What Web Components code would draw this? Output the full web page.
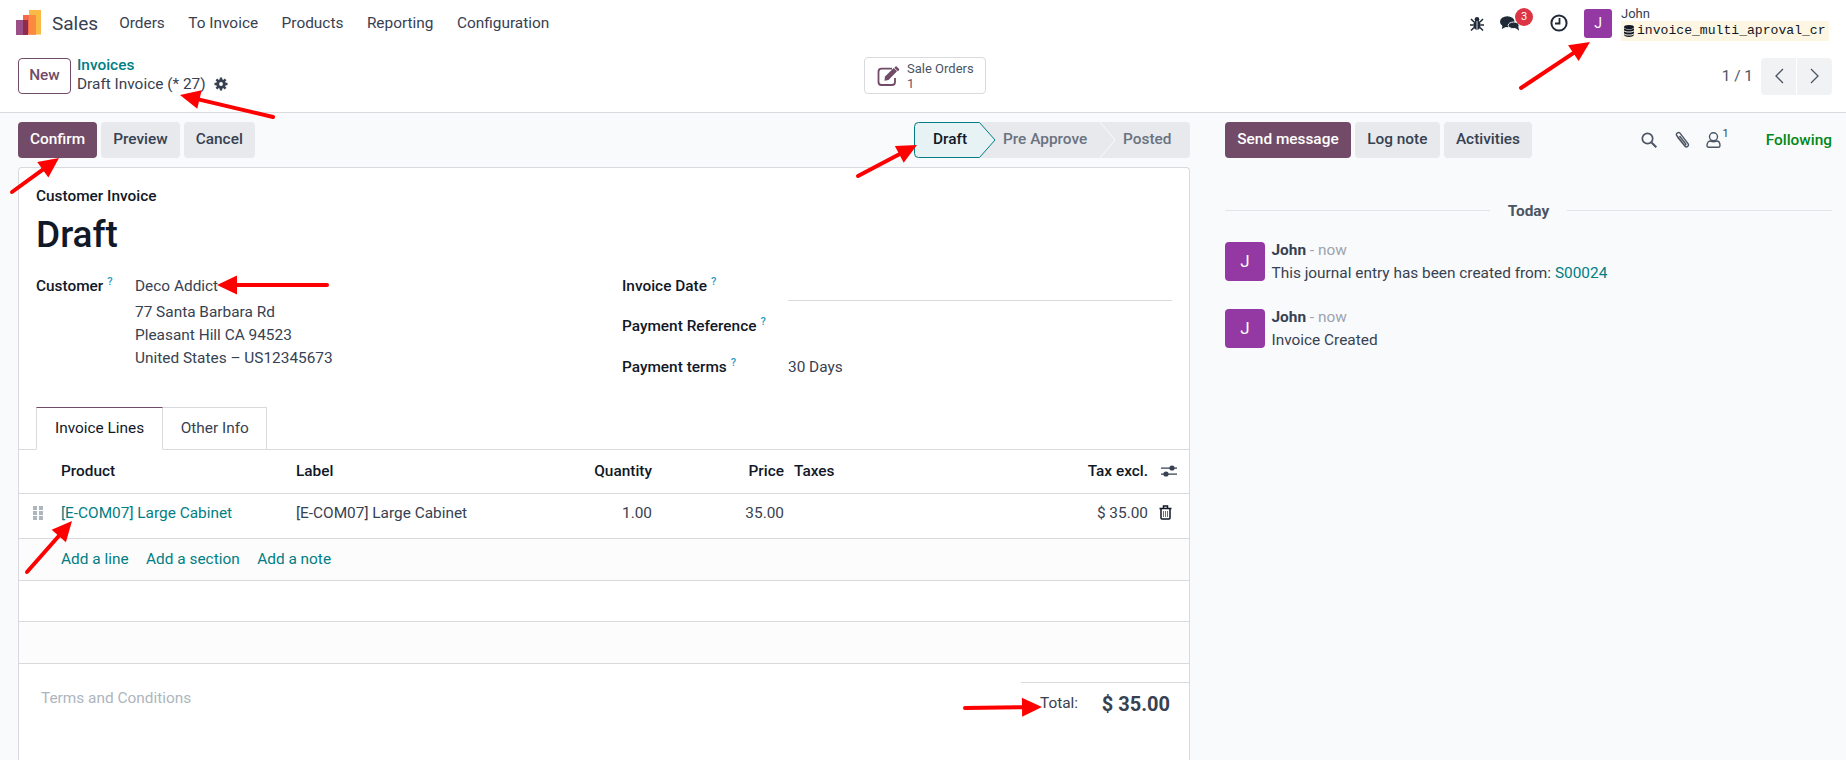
<!DOCTYPE html>
<html>
<head>
<meta charset="utf-8">
<style>
html, body { margin: 0; height: 760px; overflow: hidden; background: #fff; }
body { font-family: Roboto, "Liberation Sans", sans-serif; font-size: 15.4px; color: #374151; position: relative; }
</style>
</head>
<body>
<app-navbar></app-navbar>
<control-panel></control-panel>
<main-area></main-area>
<red-arrows></red-arrows>

<script>
const ICONS = {
    bug: `<svg width="14" height="15" viewBox="0 0 14 15" fill="#1f2937"><ellipse cx="7" cy="9" rx="3.6" ry="5"/><circle cx="7" cy="3.2" r="2.3"/><path d="M1 3l3 3M13 3l-3 3M0 9h3.5M14 9h-3.5M1 14.5l3-3M13 14.5l-3-3" stroke="#1f2937" stroke-width="1.5"/><path d="M7 5v9" stroke="#fff" stroke-width=".8"/></svg>`,
    chat: `<svg width="20" height="17" viewBox="0 0 22 18" fill="#1f2937"><ellipse cx="8" cy="7" rx="8" ry="6"/><path d="M3 10l-1 5 6-3z"/><ellipse cx="15" cy="11" rx="6" ry="3.6" stroke="#fff"/><path d="M16 13l5 4-1-5z"/></svg>`,
    clock: `<svg width="18" height="18" viewBox="0 0 18 18" fill="none" stroke="#1f2937"><circle cx="9" cy="9" r="7.6" stroke-width="2"/><path d="M9.5 4v5.5H5" stroke-width="1.8"/></svg>`,
    db: `<svg width="10" height="12" viewBox="0 0 10 12" fill="#111827"><ellipse cx="5" cy="2" rx="5" ry="2"/><path d="M0 3.300C1 4.900 9 4.900 10 3.300v2C9 6.900 1 6.900 0 5.300zM0 6.300C1 7.900 9 7.900 10 6.300v2C9 9.900 1 9.900 0 8.300zM0 9.300C1 10.900 9 10.900 10 9.300V10C9 12.500 1 12.500 0 10z"/></svg>`,
    gear: `<svg width="14" height="14" viewBox="0 0 14 14"><path d="M7 .5v13M.5 7h13M2.400 2.400l9.200 9.200M11.600 2.400l-9.200 9.200" stroke="#374151" stroke-width="2.400"/><circle cx="7" cy="7" r="4.800" fill="#374151"/><circle cx="7" cy="7" r="1.900" fill="#fff"/></svg>`,
    edit: `<svg width="24" height="20" viewBox="0 0 24 20" fill="none"><path d="M15 2.700H4.500A3 3 0 0 0 1.500 5.700v10.300a3 3 0 0 0 3 3h10.500a3 3 0 0 0 3-3v-4" stroke="#714b67" stroke-width="1.800"/><path d="M8 10.500L16.700 2l3.300 3.300-8.500 8.700-4 .7z" fill="#714b67"/><path d="M18 .8l1.300-.5 3 3-.5 1.200-1 .8-3.300-3.300z" fill="#714b67"/></svg>`,
    trash: `<svg width="13" height="15" viewBox="0 0 13 15" fill="none" stroke="#111827" stroke-width="1.500"><path d="M.5 3.500h12M4.500 3V1h4v2M2 3.500V13a1 1 0 0 0 1 1h7a1 1 0 0 0 1-1V3.500"/><path d="M4.500 6v6M6.500 6v6M8.500 6v6" stroke="#8a6d3b" stroke-width="1"/></svg>`,
    sliders: `<svg width="16" height="14" viewBox="0 0 16 14" fill="#374151"><path d="M0 3.500h16v1.200H0zM0 9.500h16v1.200H0z"/><circle cx="11" cy="4" r="2.600"/><circle cx="5" cy="10" r="2.600"/></svg>`,
    search: `<svg width="16" height="16" viewBox="0 0 16 16" fill="none" stroke="#4b5563" stroke-width="1.700"><circle cx="6.500" cy="6.500" r="5.200"/><path d="M10.500 10.500L15.300 15.300" stroke-width="2"/></svg>`,
    clip: `<svg width="17" height="18" viewBox="0 0 17 18" fill="none" stroke="#4b5563" stroke-width="1.400"><path d="M3.500 6l7.500 9.200c1.500 1.800 4.500-.4 3-2.500L6 2.200C4.700.5 1.500 2.300 2.700 4.500l7.300 9.300c.8 1 2.300-.1 1.600-1.100L5.500 5"/></svg>`,
    user: `<svg width="15" height="16" viewBox="0 0 15 16" fill="none" stroke="#4b5563" stroke-width="1.400"><ellipse cx="7.500" cy="4.700" rx="4" ry="4"/><path d="M1 13.500c0-3 1.700-4.500 3.500-4.500 2 1 4 1 6 0 1.800 0 3.500 1.500 3.500 4.500 0 1-.7 1.800-1.700 1.800H2.700C1.700 15.300 1 14.500 1 13.500z"/></svg>`,
    grip: `<svg width="10" height="14" viewBox="0 0 10 14" fill="#adb5bd"><path d="M0 0h4v4H0zM6 0h4v4H6zM0 5h4v4H0zM6 5h4v4H6zM0 10h4v4H0zM6 10h4v4H6z"/></svg>`
};

// top bar with the app menu and the systray
class AppNavbar extends HTMLElement {
    constructor() {
        super();
        this.attachShadow({mode: "open"}).innerHTML = `
        <style>
        :host { display: flex; align-items: center; height: 46px; padding-left: 15px; padding-right: 17px; color: #374151; box-sizing: border-box; }
        .logo { width: 26px; height: 26px; margin-right: 11px; }
        .app { font-size: 19px; margin-right: 21px; color: #374151; }
        .menu { display: flex; gap: 23.500px; color: #374151; }
        .right { margin-left: auto; display: flex; align-items: center; }
        .bug { display: flex; margin-right: 16px; }
        .chat { display: flex; position: relative; margin-right: 30px; }
        .badge { position: absolute; left: 15px; top: -7px; width: 18px; height: 18px; border-radius: 50%; background: #dc3545; color: #fff; font-size: 11px; line-height: 18px; text-align: center; }
        .clock { display: flex; margin-right: 16px; }
        .avatar { width: 28px; height: 29px; background: #9439a3; border-radius: 3px; color: #fff; font-size: 14px; line-height: 29px; text-align: center; margin-right: 9px; }
        .who { width: 208px; font-size: 13px; line-height: 14px; margin-top: 2px; }
        .db { display: flex; align-items: center; gap: 3px; background: #fdf6e3; height: 20px; padding-left: 3px; font-family: "Liberation Mono", monospace; font-size: 13.1px; color: #111827; }
        </style>
        <svg class="logo" viewBox="0 0 26 26"><rect x="14" y="0" width="12" height="24.500" fill="#fbb945"/><rect x="8" y="5" width="13" height="19.500" fill="#f5694a"/><rect x="14" y="5" width="7" height="19.500" fill="#fc8a3e"/><rect x="1" y="10" width="12" height="15" fill="#9a5086"/><rect x="8" y="10" width="5" height="15" fill="#8e2c4e"/></svg>
        <span class="app">Sales</span>
        <nav class="menu"><span>Orders</span><span>To Invoice</span><span>Products</span><span>Reporting</span><span>Configuration</span></nav>
        <div class="right">
            <span class="bug">${ICONS.bug}</span>
            <span class="chat">${ICONS.chat}<span class="badge">3</span></span>
            <span class="clock">${ICONS.clock}</span>
            <span class="avatar">J</span>
            <div class="who">John<div class="db">${ICONS.db}<span>invoice_multi_aproval_cr</span></div></div>
        </div>`;
    }
}
customElements.define("app-navbar", AppNavbar);

class ControlPanel extends HTMLElement {
    constructor() {
        super();
        this.attachShadow({mode: "open"}).innerHTML = `
        <style>
        :host { display: grid; grid-template-columns: 1fr auto 1fr; align-items: center; height: 67px; padding: 2px 14px 8px 18px; box-sizing: border-box; border-bottom: 1px solid #d8dadd; }
        .left { display: flex; align-items: center; }
        .new { width: 53px; height: 36px; box-sizing: border-box; border: 1px solid #714b67; border-radius: 4px; color: #714b67; font-weight: 500; line-height: 33px; text-align: center; margin-right: 6px; }
        .crumbs { line-height: 21px; }
        .crumbs a { display: block; color: #017e84; font-weight: 500; line-height: 17px; }
        .gear { display: inline-flex; margin-left: 8px; vertical-align: -2px; }
        .stat { display: flex; align-items: center; gap: 6px; width: 122px; height: 37px; box-sizing: border-box; padding-left: 12px; margin-top: -1px; border: 1px solid #d8dadd; border-radius: 4px; font-size: 13px; line-height: 15px; color: #4b5563; }
        .stat div span { display: block; color: #714b67; }
        .pager { justify-self: end; display: flex; align-items: center; gap: 8px; color: #4b5563; }
        .nav { display: flex; gap: 1px; }
        .nav span { display: flex; align-items: center; justify-content: center; width: 35px; height: 37px; background: #f1f2f4; }
        .nav span:first-child { border-radius: 4px 0 0 4px; }
        .nav span:last-child { border-radius: 0 4px 4px 0; }
        </style>
        <div class="left">
            <span class="new">New</span>
            <div class="crumbs"><a>Invoices</a>Draft Invoice (* 27)<span class="gear">${ICONS.gear}</span></div>
        </div>
        <div class="stat">${ICONS.edit}<div>Sale Orders<span>1</span></div></div>
        <div class="pager">
            <span>1 / 1</span>
            <div class="nav">
                <span><svg width="10" height="16" viewBox="0 0 10 16" fill="none" stroke="#4b5563" stroke-width="1.300"><path d="M9 1L2 8l7 7"/></svg></span>
                <span><svg width="10" height="16" viewBox="0 0 10 16" fill="none" stroke="#4b5563" stroke-width="1.300"><path d="M1 1l7 7-7 7"/></svg></span>
            </div>
        </div>`;
    }
}
customElements.define("control-panel", ControlPanel);

class OdooButton extends HTMLElement {
    constructor() {
        super();
        this.attachShadow({mode: "open"}).innerHTML = `
        <style>
        :host { display: block; height: 36px; padding: 0 12px; border-radius: 4px; background: #e7e9ed; color: #374151; font-weight: 500; line-height: 34px; }
        :host([primary]) { background: #714b67; color: #fff; }
        </style>
        <slot></slot>`;
    }
}
customElements.define("odoo-button", OdooButton);

class StatusBar extends HTMLElement {
    constructor() {
        super();
        this.attachShadow({mode: "open"}).innerHTML = `
        <style>
        :host { display: flex; height: 36px; width: 276px; background: #e7e9ed; border-radius: 4px; font-weight: 500; line-height: 34px; color: #6b7280; position: relative; }
        span { display: block; }
        .cur { color: #111827; width: 89px; padding-left: 19px; box-sizing: border-box; }
        .pre { width: 120px; }
        svg { position: absolute; left: 0; top: 0; }
        .txt { position: relative; display: flex; }
        </style>
        <svg width="276" height="36" viewBox="0 0 276 36">
            <path d="M4.500.5H65.500L81 18 65.500 35.500H4.500A4 4 0 0 1 .5 31.500V4.500A4 4 0 0 1 4.500.5z" fill="#e6f2f3" stroke="#017e84"/>
            <path d="M186 0l15 18-15 18" fill="none" stroke="#f9fafb"/>
        </svg>
        <div class="txt"><span class="cur">Draft</span><span class="pre">Pre Approve</span><span class="post">Posted</span></div>`;
    }
}
customElements.define("status-bar", StatusBar);

class FieldRow extends HTMLElement {
    constructor() {
        super();
        this.attachShadow({mode: "open"}).innerHTML = `
        <style>
        :host { display: flex; }
        .lab { font-weight: 500; color: #111827; flex: 0 0 var(--lab, 166px); line-height: 21px; }
        sup { color: #2a9bc4; font-size: 11px; font-weight: 500; margin-left: 4px; line-height: 0; vertical-align: 6px; }
        .val { flex: 1; line-height: 21px; }
        </style>
        <span class="lab"><slot name="label"></slot><sup>?</sup></span>
        <div class="val"><slot></slot></div>`;
    }
}
customElements.define("field-row", FieldRow);

class InvoiceLines extends HTMLElement {
    constructor() {
        super();
        this.attachShadow({mode: "open"}).innerHTML = `
        <style>
        :host { display: block; }
        .row { display: grid; grid-template-columns: 42px 235px 246px 110px 132px 1fr 41px; align-items: center; box-sizing: border-box; border-bottom: 1px solid #d8dadd; }
        .r { text-align: right; }
        .head { height: 44px; padding-bottom: 2px; font-weight: 500; color: #111827; }
        .line { height: 45px; padding-bottom: 7px; }
        .add { height: 42px; padding-bottom: 2px; background: #fcfcfc; padding-left: 42px; display: flex; gap: 17.500px; align-items: center; color: #017e84; }
        .empty { height: 41px; }
        .empty.b { height: 42px; background: #fcfcfc; }
        .grip { display: flex; padding-left: 14px; }
        .act { display: flex; padding-left: 11px; }
        .head .act { padding-left: 13px; }
        a { color: #017e84; }
        .taxes { padding-left: 10px; }
        </style>
        <div class="row head"><span></span><span>Product</span><span>Label</span><span class="r">Quantity</span><span class="r">Price</span>
            <span style="display:flex;justify-content:space-between"><span class="taxes">Taxes</span><span>Tax excl.</span></span><span class="act">${ICONS.sliders}</span></div>
        <div class="row line"><span class="grip">${ICONS.grip}</span><a>[E-COM07] Large Cabinet</a><span>[E-COM07] Large Cabinet</span><span class="r">1.00</span><span class="r">35.00</span>
            <span class="r">$ 35.00</span><span class="act">${ICONS.trash}</span></div>
        <div class="row add"><span>Add a line</span><span>Add a section</span><span>Add a note</span></div>
        <div class="row empty"></div>
        <div class="row empty b"></div>`;
    }
}
customElements.define("invoice-lines", InvoiceLines);

class InvoiceSheet extends HTMLElement {
    constructor() {
        super();
        this.attachShadow({mode: "open"}).innerHTML = `
        <style>
        :host { display: block; flex: 1; background: #fff; border: 1px solid #d8dadd; border-bottom: 0; border-radius: 4px 4px 0 0; }
        .top { padding: 18px 17px 0 17px; }
        .kind { font-weight: 500; color: #111827; line-height: 21px; }
        h1 { margin: 5px 0 0; font-size: 37px; font-weight: 500; line-height: 46px; color: #111827; }
        .groups { display: grid; grid-template-columns: 586px 1fr; margin-top: 18px; height: 131px; }
        .rgroup { display: flex; flex-direction: column; }
        .addr { line-height: 23.200px; margin-top: 4px; }
        .dateval { height: 24px; border-bottom: 1px solid #d8dadd; }
        .tabs { display: flex; padding-left: 17px; height: 42px; border-bottom: 1px solid #d8dadd; }
        .tab { display: block; box-sizing: border-box; height: 43px; line-height: 41px; padding: 0 17.500px; border: 1px solid #d8dadd; border-left: 0; }
        .tab.on { padding: 0 18px; border-left: 1px solid #d8dadd; border-top: 1px solid #714b67; border-bottom-color: #fff; color: #111827; }
        .foot { display: flex; justify-content: space-between; height: 96px; }
        .terms { padding: 25px 0 0 22px; color: #adb5bd; }
        .totals { width: 168px; margin-top: 18px; height: 40px; box-sizing: border-box; border-top: 1px solid #d8dadd; display: flex; padding: 8px 19px 0 0; }
        .totals span { line-height: 27px; }
        .totals .tl { margin-left: 19px; line-height: 24px; }
        .totals .tv { margin-left: auto; font-size: 20px; font-weight: 700; color: #374151; }
        </style>
        <div class="top">
            <div class="kind">Customer Invoice</div>
            <h1>Draft</h1>
            <div class="groups">
                <div>
                    <field-row style="--lab:99px"><span slot="label">Customer</span>Deco Addict
                        <div class="addr">77 Santa Barbara Rd<br>Pleasant Hill CA 94523<br>United States &#8211; US12345673</div>
                    </field-row>
                </div>
                <div class="rgroup">
                    <field-row><span slot="label">Invoice Date</span><div class="dateval"></div></field-row>
                    <field-row style="margin-top:15px"><span slot="label">Payment Reference</span></field-row>
                    <field-row style="margin-top:20px"><span slot="label">Payment terms</span>30 Days</field-row>
                </div>
            </div>
        </div>
        <div class="tabs"><span class="tab on">Invoice Lines</span><span class="tab">Other Info</span></div>
        <invoice-lines></invoice-lines>
        <div class="foot">
            <div class="terms">Terms and Conditions</div>
            <div class="totals"><span class="tl">Total:</span><span class="tv">$ 35.00</span></div>
        </div>`;
    }
}
customElements.define("invoice-sheet", InvoiceSheet);

class ChatMessage extends HTMLElement {
    constructor() {
        super();
        this.attachShadow({mode: "open"}).innerHTML = `
        <style>
        :host { display: flex; gap: 6.500px; height: 40px; line-height: 21px; }
        .av { flex: 0 0 40px; height: 39px; border-radius: 4px; background: #9439a3; color: #fff; text-align: center; line-height: 39px; font-size: 17px; }
        .head { line-height: 23px; margin: -3px 0 1px; }
        b { font-weight: 700; }
        i { font-style: normal; color: #9ca3af; }
        ::slotted(a) { color: #017e84; }
        </style>
        <div class="av">J</div>
        <div><div class="head"><b>John</b> <i>- now</i></div><slot></slot></div>`;
    }
}
customElements.define("chat-message", ChatMessage);

class ChatterPanel extends HTMLElement {
    constructor() {
        super();
        this.attachShadow({mode: "open"}).innerHTML = `
        <style>
        :host { display: block; width: 639px; box-sizing: border-box; padding: 9px 14px 0 18px; }
        .bar { display: flex; align-items: center; gap: 4px; }
        .bar odoo-button { padding: 0 12.250px; }
        .tools { margin-left: auto; display: flex; align-items: center; }
        .n { font-size: 11px; align-self: flex-start; margin: -4px 0 0 1.500px; }
        .follow { color: #008818; font-weight: 500; margin-left: 37px; }
        .sep { display: flex; align-items: center; margin-top: 42px; height: 21px; font-weight: 700; color: #4b5563; }
        .sep:before, .sep:after { content: ""; flex: 1; height: 1px; background: #e2e4e8; }
        .sep span { margin: 0 18px; }
        .list { display: flex; flex-direction: column; gap: 27px; margin-top: 21px; }
        </style>
        <div class="bar">
            <odoo-button primary>Send message</odoo-button><odoo-button>Log note</odoo-button><odoo-button>Activities</odoo-button>
            <div class="tools">${ICONS.search}<span style="width:17px"></span>${ICONS.clip}<span style="width:15px"></span>${ICONS.user}<span class="n">1</span><span class="follow">Following</span></div>
        </div>
        <div class="sep"><span>Today</span></div>
        <div class="list">
            <chat-message>This journal entry has been created from: <a>S00024</a></chat-message>
            <chat-message>Invoice Created</chat-message>
        </div>`;
    }
}
customElements.define("chatter-panel", ChatterPanel);

class MainArea extends HTMLElement {
    constructor() {
        super();
        this.attachShadow({mode: "open"}).innerHTML = `
        <style>
        :host { display: flex; height: 647px; background: #f9fafb; overflow: hidden; }
        .form { flex: 0 0 1207px; box-sizing: border-box; padding: 9px 17px 0 18px; display: flex; flex-direction: column; }
        .actions { display: flex; justify-content: space-between; margin-bottom: 9px; }
        .btns { display: flex; gap: 4px; }
        </style>
        <div class="form">
            <div class="actions">
                <div class="btns"><odoo-button primary>Confirm</odoo-button><odoo-button>Preview</odoo-button><odoo-button>Cancel</odoo-button></div>
                <status-bar></status-bar>
            </div>
            <invoice-sheet></invoice-sheet>
        </div>
        <chatter-panel></chatter-panel>`;
    }
}
customElements.define("main-area", MainArea);

// the red annotation arrows drawn over the screenshot
class RedArrows extends HTMLElement {
    constructor() {
        super();
        const list = [[273,117,180,95],[12,192,59,158],[858,176,917,145],[1521,88,1590,42],[327,285,217,285],[27,572,72,521],[965,708,1042,707]];
        let out = "";
        for (const a of list) {
            const dx = a[2] - a[0], dy = a[3] - a[1], len = Math.hypot(dx, dy);
            const ux = dx / len, uy = dy / len, bx = a[2] - ux * 20, by = a[3] - uy * 20;
            out += `<line x1="${a[0]}" y1="${a[1]}" x2="${bx}" y2="${by}" stroke="#f00" stroke-width="4" stroke-linecap="round"/>`;
            out += `<polygon fill="#f00" points="${a[2]},${a[3]} ${bx - uy * 9.500},${by + ux * 9.500} ${bx + uy * 9.500},${by - ux * 9.500}"/>`;
        }
        this.attachShadow({mode: "open"}).innerHTML = `
        <style>:host { position: absolute; left: 0; top: 0; pointer-events: none; }</style>
        <svg width="1846" height="760">${out}</svg>`;
    }
}
customElements.define("red-arrows", RedArrows);
</script>
</body>
</html>
